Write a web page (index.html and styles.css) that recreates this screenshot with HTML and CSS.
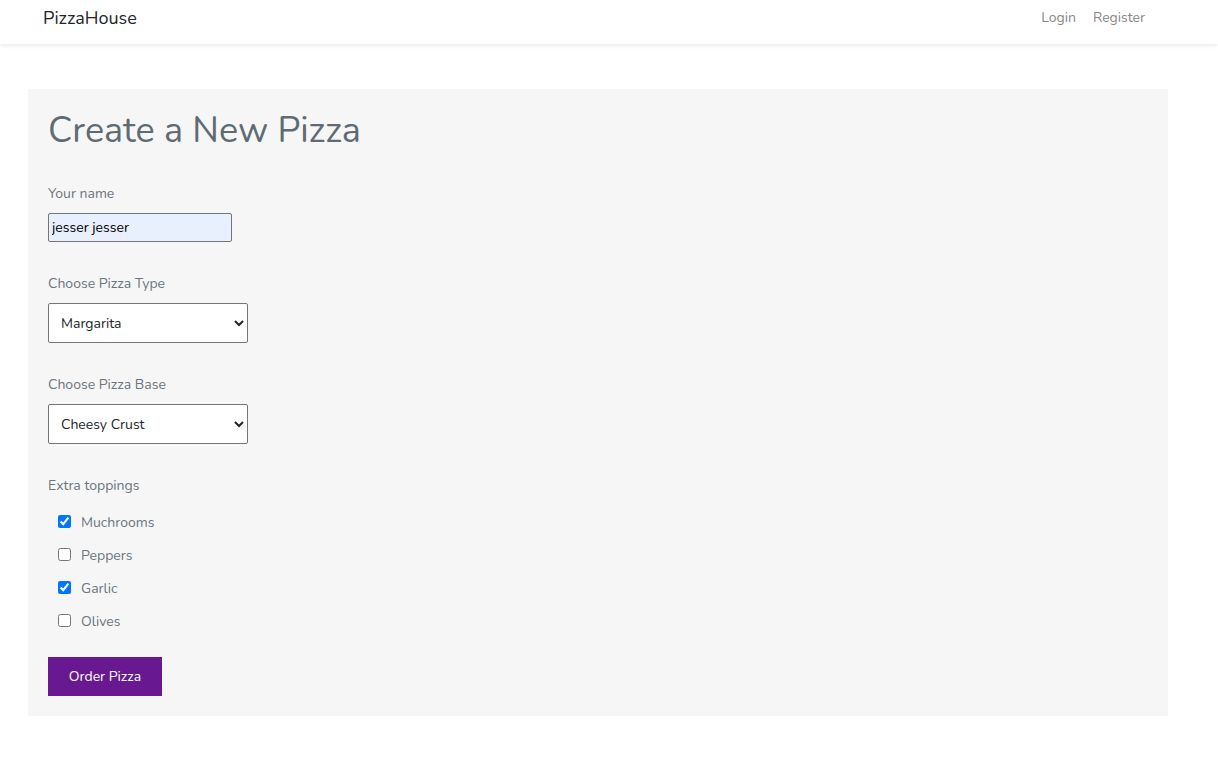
FILE: index.html
```html
<!DOCTYPE html>
<html lang="en">
<head>
<meta charset="utf-8">
<title>PizzaHouse</title>
<link rel="stylesheet" href="styles.css">
</head>
<body>
<nav class="navbar">
  <a class="brand" href="#">PizzaHouse</a>
  <div class="nav-links">
    <a href="#">Login</a>
    <a href="#">Register</a>
  </div>
</nav>
<main class="page">
  <section class="card">
    <h1 class="title">Create a New Pizza</h1>
    <form class="form">
      <div class="group">
        <label class="label" for="name">Your name</label>
        <input class="text-input" id="name" type="text" value="jesser jesser">
      </div>
      <div class="group">
        <label class="label" for="type">Choose Pizza Type</label>
        <select class="select" id="type">
          <option>Margarita</option>
        </select>
      </div>
      <div class="group">
        <label class="label" for="base">Choose Pizza Base</label>
        <select class="select" id="base">
          <option>Cheesy Crust</option>
        </select>
      </div>
      <div class="group">
        <span class="label">Extra toppings</span>
        <div class="checks">
          <label class="check"><input type="checkbox" checked><span>Muchrooms</span></label>
          <label class="check"><input type="checkbox"><span>Peppers</span></label>
          <label class="check"><input type="checkbox" checked><span>Garlic</span></label>
          <label class="check"><input type="checkbox"><span>Olives</span></label>
        </div>
      </div>
      <button class="btn" type="button">Order Pizza</button>
    </form>
  </section>
</main>
</body>
</html>
```
FILE: styles.css
```css
* { box-sizing: border-box; }
html, body { margin: 0; padding: 0; background: #fff; }
body {
  font-family: "Nunito", "Lato", "Noto Sans", sans-serif;
  font-size: 14px;
  line-height: 1.5;
  color: #6c757d;
}
.navbar {
  height: 44px;
  display: flex;
  align-items: center;
  justify-content: space-between;
  padding: 0 73px 0 43px;
  background: #fff;
  box-shadow: 0 2px 4px rgba(0,0,0,0.08);
}
.brand {
  font-size: 18px;
  color: #212529;
  text-decoration: none;
  margin-top: -8px;
}
.nav-links {
  display: flex;
  gap: 17px;
  margin-top: -10px;
}
.nav-links a {
  color: #888;
  text-decoration: none;
  font-size: 14px;
}
.page {
  padding: 45px 50px 40px 28px;
}
.card {
  background: #f6f6f6;
  padding: 20px 20px 20px 20px;
}
.title {
  margin: 0;
  font-size: 36px;
  font-weight: 400;
  line-height: 43px;
  color: #5f6b72;
}
.form { margin-top: 31px; }
.group { margin-bottom: 31px; }
.label {
  display: block;
  line-height: 21px;
  color: #6c757d;
}
.text-input {
  display: block;
  margin-top: 9px;
  width: 184px;
  height: 29px;
  padding: 0 3px;
  font-family: inherit;
  font-size: 14px;
  color: #000;
  background: #e8f0fe;
  border: 1px solid #767676;
  border-radius: 2px;
}
.select {
  display: block;
  margin-top: 9px;
  width: 200px;
  height: 40px;
  padding: 0 8px;
  font-family: inherit;
  font-size: 14px;
  color: #212529;
  background: #fff;
  border: 1px solid #767676;
  border-radius: 2px;
}
.checks {
  margin-top: 9px;
  padding-left: 10px;
}
.check {
  display: flex;
  align-items: center;
  height: 33px;
}
.check input {
  margin: 0 10px 0 0;
  width: 13px;
  height: 13px;
}
.check span { padding-top: 2px; }
.group:last-of-type { margin-bottom: 20px; }
.btn {
  display: block;
  width: 114px;
  height: 39px;
  border: 0;
  border-radius: 0;
  background: #681890;
  color: #fff;
  font-family: inherit;
  font-size: 14px;
}
```
